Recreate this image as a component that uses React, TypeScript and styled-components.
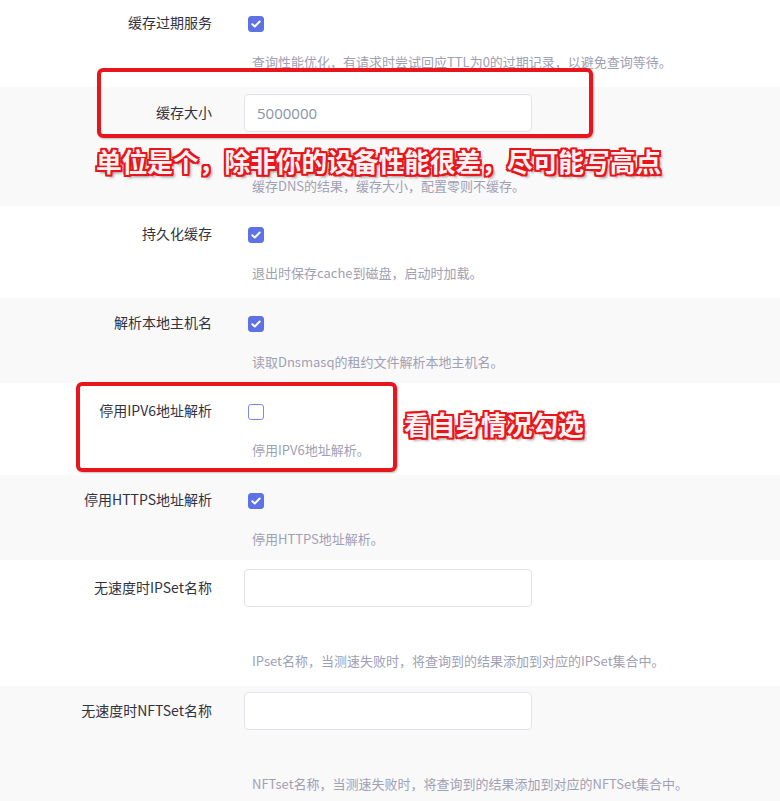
import { FC } from "react";
import styled, { createGlobalStyle } from "styled-components";

const GlobalStyle = createGlobalStyle`
  body {
    margin: 0;
    background: #fff;
    font-family: "Noto Sans CJK SC", "Noto Sans", sans-serif;
  }
`;

const Page = styled.div`
  position: relative;
  width: 780px;
  height: 801px;
  overflow: hidden;
`;

const Row = styled.div<{ $shade?: boolean; $pt: number; $pb: number }>`
  display: grid;
  grid-template-columns: 212px 1fr;
  column-gap: 32px;
  padding: ${(p) => p.$pt}px 0 ${(p) => p.$pb}px;
  background: ${(p) => (p.$shade ? "#f9f9fa" : "#fff")};
`;

const Label = styled.div<{ $top?: number }>`
  margin-top: ${(p) => p.$top || 0}px;
  text-align: right;
  font-size: 14px;
  line-height: 20px;
  color: #32323f;
  white-space: nowrap;
`;

const Field = styled.div`
  display: flex;
  flex-direction: column;
  align-items: flex-start;
`;

const Box = styled.span<{ $on?: boolean }>`
  display: flex;
  align-items: center;
  justify-content: center;
  box-sizing: border-box;
  margin: 4px 0 0 4px;
  width: 16px;
  height: 16px;
  border-radius: 3px;
  background: ${(p) => (p.$on ? "#5e72e4" : "#fff")};
  border: 1px solid ${(p) => (p.$on ? "#5e72e4" : "#7b89ea")};
`;

const TextInput = styled.input`
  box-sizing: border-box;
  width: 288px;
  height: 38px;
  padding: 0 12px;
  border: 1px solid #e1e3ea;
  border-radius: 4px;
  background: #fff;
  font-family: "Open Sans", sans-serif;
  font-size: 15px;
  color: #333;
  outline: none;
  &::placeholder {
    color: #8a93a8;
  }
`;

const Desc = styled.div<{ $gap: number }>`
  margin: ${(p) => p.$gap}px 0 0 8px;
  font-size: 13px;
  line-height: 18px;
  color: #a0a0b3;
  white-space: nowrap;
`;

// red annotation marks drawn over the form
const Frame = styled.div`
  position: absolute;
  box-sizing: border-box;
  border: 4px solid #e8161c;
  border-radius: 6px;
  box-shadow: 1px 1px 2px rgba(0, 0, 0, 0.25);
`;

const Note = styled.div`
  position: absolute;
  font-size: 25.7px;
  line-height: 28px;
  font-weight: 700;
  color: #fff2f2;
  white-space: nowrap;
  text-shadow: -2px -2px 0 #e8161c, 2px -2px 0 #e8161c, -2px 2px 0 #e8161c,
    2px 2px 0 #e8161c, 0 -2px 0 #e8161c, 0 2px 0 #e8161c, -2px 0 0 #e8161c,
    2px 0 0 #e8161c, 3px 3px 3px rgba(0, 0, 0, 0.45);
`;

const Check: FC<{ on?: boolean }> = ({ on }) => (
  <Box $on={on}>
    {on && (
      <svg width="10" height="8" viewBox="0 0 10 8">
        <path
          d="M1.3 4.2 L3.8 6.5 L8.7 1.5"
          fill="none"
          stroke="#fff"
          strokeWidth="2"
          strokeLinecap="round"
          strokeLinejoin="round"
        />
      </svg>
    )}
  </Box>
);

interface ICheckRow {
  label: string;
  desc: string;
  on: boolean;
  shade?: boolean;
  pt: number;
  pb: number;
}

const CheckRow: FC<ICheckRow> = ({ label, desc, on, shade, pt, pb }) => (
  <Row $shade={shade} $pt={pt} $pb={pb}>
    <Label>{label}</Label>
    <Field>
      <Check on={on} />
      <Desc $gap={21}>{desc}</Desc>
    </Field>
  </Row>
);

interface IInputRow {
  label: string;
  desc: string;
  placeholder?: string;
  shade?: boolean;
  pt: number;
  pb: number;
}

const InputRow: FC<IInputRow> = ({ label, desc, placeholder, shade, pt, pb }) => (
  <Row $shade={shade} $pt={pt} $pb={pb}>
    <Label $top={8}>{label}</Label>
    <Field>
      <TextInput placeholder={placeholder} />
      <Desc $gap={45}>{desc}</Desc>
    </Field>
  </Row>
);

const App: FC = () => {
  return (
    <>
      <GlobalStyle />
      <Page>
        <CheckRow
          label="缓存过期服务"
          desc="查询性能优化，有请求时尝试回应TTL为0的过期记录，以避免查询等待。"
          on
          pt={12}
          pb={16}
        />
        <InputRow
          label="缓存大小"
          desc="缓存DNS的结果，缓存大小，配置零则不缓存。"
          placeholder="5000000"
          shade
          pt={7}
          pb={11}
        />
        <CheckRow
          label="持久化缓存"
          desc="退出时保存cache到磁盘，启动时加载。"
          on
          pt={17}
          pb={16}
        />
        <CheckRow
          label="解析本地主机名"
          desc="读取Dnsmasq的租约文件解析本地主机名。"
          on
          shade
          pt={14}
          pb={12}
        />
        <CheckRow
          label="停用IPV6地址解析"
          desc="停用IPV6地址解析。"
          on={false}
          pt={17}
          pb={16}
        />
        <CheckRow
          label="停用HTTPS地址解析"
          desc="停用HTTPS地址解析。"
          on
          shade
          pt={14}
          pb={12}
        />
        <InputRow
          label="无速度时IPSet名称"
          desc="IPset名称，当测速失败时，将查询到的结果添加到对应的IPSet集合中。"
          pt={9}
          pb={16}
        />
        <InputRow
          label="无速度时NFTSet名称"
          desc="NFTset名称，当测速失败时，将查询到的结果添加到对应的NFTSet集合中。"
          shade
          pt={6}
          pb={30}
        />

        <Frame style={{ left: 97, top: 68, width: 496, height: 70 }} />
        <Note style={{ left: 96, top: 147 }}>
          单位是个，除非你的设备性能很差，尽可能写高点
        </Note>
        <Frame style={{ left: 76, top: 382, width: 321, height: 90 }} />
        <Note style={{ left: 404, top: 410 }}>看自身情况勾选</Note>
      </Page>
    </>
  );
};

export default App;
